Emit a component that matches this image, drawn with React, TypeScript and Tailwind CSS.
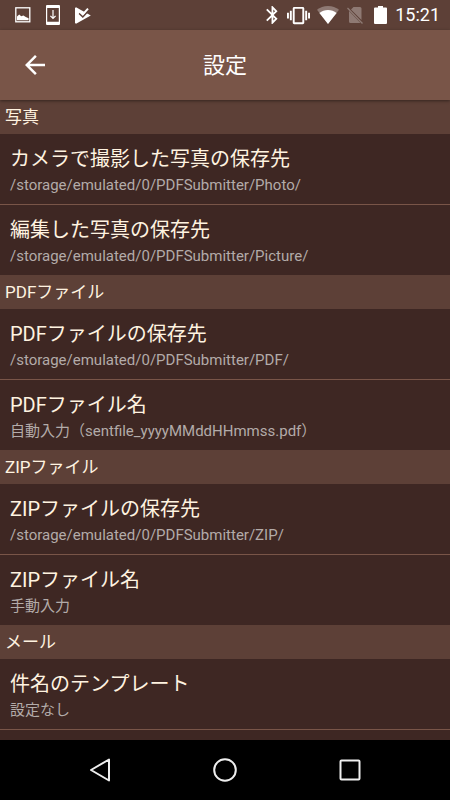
import React from 'react';

interface SettingItem {
  title: string;
  summary: string;
  divider?: boolean;
}

interface SettingSection {
  heading: string;
  items: SettingItem[];
}

const sections: SettingSection[] = [
  {
    heading: '写真',
    items: [
      { title: 'カメラで撮影した写真の保存先', summary: '/storage/emulated/0/PDFSubmitter/Photo/', divider: true },
      { title: '編集した写真の保存先', summary: '/storage/emulated/0/PDFSubmitter/Picture/' },
    ],
  },
  {
    heading: 'PDFファイル',
    items: [
      { title: 'PDFファイルの保存先', summary: '/storage/emulated/0/PDFSubmitter/PDF/', divider: true },
      { title: 'PDFファイル名', summary: '自動入力（sentfile_yyyyMMddHHmmss.pdf）' },
    ],
  },
  {
    heading: 'ZIPファイル',
    items: [
      { title: 'ZIPファイルの保存先', summary: '/storage/emulated/0/PDFSubmitter/ZIP/', divider: true },
      { title: 'ZIPファイル名', summary: '手動入力' },
    ],
  },
  {
    heading: 'メール',
    items: [{ title: '件名のテンプレート', summary: '設定なし', divider: true }],
  },
];

const StatusBar: React.FC = () => (
  <div className="flex h-[30px] shrink-0 items-center justify-between bg-[#5d4037] pr-[10px] pl-[15px] text-white">
    <div className="flex items-center">
      {/* Screenshot saved */}
      <svg className="h-4 w-4" viewBox="0 0 16 16" fill="none">
        <rect x="0.8" y="0.8" width="14" height="14" stroke="currentColor" strokeWidth="1.3" />
        <path d="M2 13.2V9.4l2.2-1.8 2 1.6L8.4 8.4l2.4 1.6 2.8 1.2v2z" fill="currentColor" />
      </svg>
      {/* Download to device */}
      <svg className="ml-[15px] h-5 w-[14px]" viewBox="0 0 14 20" fill="none">
        <path fillRule="evenodd" d="M1 0h12a1 1 0 0 1 1 1v18a1 1 0 0 1-1 1H1a1 1 0 0 1-1-1V1a1 1 0 0 1 1-1zM1.2 3v13.8h11.6V3z" fill="currentColor" />
        <path d="M7 5v8.4M4.4 10.8L7 13.4l2.6-2.6" stroke="currentColor" strokeWidth="1.2" />
      </svg>
      {/* Store update finished */}
      <svg className="ml-[15px] h-[17px] w-4" viewBox="0 0 16 17" fill="none">
        <path d="M1 0.2L15.8 8.5 1 16.8 0 16V1z" fill="currentColor" />
        <path d="M4.2 6.4l3.6 3.4L14 3.2" stroke="#5d4037" strokeWidth="1.6" />
        <path d="M5 4.8l2.8 2.6L13 1.6" stroke="currentColor" strokeWidth="2" />
      </svg>
    </div>

    <div className="flex items-center">
      <svg className="h-[18px] w-3" viewBox="5 2 13 20" fill="currentColor">
        <path d="M17.71 7.71L12 2h-1v7.59L6.41 5 5 6.41 10.59 12 5 17.59 6.41 19 11 14.41V22h1l5.71-5.71-4.3-4.29 4.3-4.29zM13 5.83l1.88 1.88L13 9.59V5.83zm1.88 10.46L13 18.17v-3.76l1.88 1.88z" />
      </svg>
      <svg className="ml-[9px] h-[23px] w-[23px]" viewBox="0 0 24 24" fill="currentColor">
        <path d="M0 15h2V9H0v6zm3 2h2V7H3v10zm19-8v6h2V9h-2zm-3 8h2V7h-2v10zM16.5 3h-9C6.67 3 6 3.67 6 4.5v15c0 .83.67 1.5 1.5 1.5h9c.83 0 1.5-.67 1.5-1.5v-15c0-.83-.67-1.5-1.5-1.5zM16 19H8V5h8v14z" />
      </svg>
      <svg className="ml-[7px] h-[18px] w-[22px]" viewBox="0 0 22 18" fill="currentColor">
        <path d="M11 0C6.7 0 2.9 1.5 0 3.8L11 18 22 3.8C19.100 1.5 15.3 0 11 0z" opacity="0.3" />
        <path d="M11 4c-3.300 0-6.200 1.100-8.600 3L11 18l8.600-11C17.200 5.100 14.300 4 11 4z" />
      </svg>
      {/* No SIM card */}
      <svg className="ml-2 h-[18px] w-4" viewBox="0 0 16 18" fill="none">
        <path d="M6.5 1H13a1.500 1.500 0 0 1 1.500 1.500V14L4 3.500zM2 5l11.500 12H3.500A1.500 1.500 0 0 1 2 15.500z" fill="currentColor" opacity="0.3" />
        <path d="M0.5 2L15.500 17.500" stroke="currentColor" strokeWidth="1.3" opacity="0.3" />
      </svg>
      <svg className="ml-[11px] h-[18px] w-[13px]" viewBox="0 0 13 18" fill="currentColor">
        <path d="M4 0h5v1.500h3a1 1 0 0 1 1 1V17a1 1 0 0 1-1 1H1a1 1 0 0 1-1-1V2.500a1 1 0 0 1 1-1h3z" />
      </svg>
      <span className="ml-2 text-lg leading-[30px]">15:21</span>
    </div>
  </div>
);

const AppBar: React.FC = () => (
  <header className="z-10 grid h-[70px] shrink-0 grid-cols-[70px_1fr_70px] items-center bg-[#795548] text-white shadow-[0_1px_3px_rgba(0,0,0,0.45)]">
    <button type="button" aria-label="戻る" className="flex h-full items-center justify-center">
      <svg className="h-[30px] w-[30px]" viewBox="0 0 24 24" fill="currentColor">
        <path d="M20 11H7.83l5.59-5.59L12 4l-8 8 8 8 1.41-1.41L7.83 13H20v-2z" />
      </svg>
    </button>
    <h1 className="pt-[2px] text-center text-[22px] leading-[30px]">設定</h1>
  </header>
);

const SettingRow: React.FC<{ item: SettingItem }> = ({ item }) => (
  <li className={item.divider ? 'border-b border-[#795548]' : ''}>
    <button type="button" className="block w-full px-[10px] pt-[11px] pb-[7px] text-left">
      <span className="block text-xl leading-7 text-[#fff3e0]">{item.title}</span>
      <span className="block text-[15px] leading-6 text-[#b3aba9]">{item.summary}</span>
    </button>
  </li>
);

const NavigationBar: React.FC = () => (
  <nav className="flex h-[60px] shrink-0 items-center justify-center bg-black text-[#eeeeee]">
    <button type="button" aria-label="戻る" className="flex h-full w-[125px] items-center justify-center">
      <svg className="h-6 w-6" viewBox="0 0 24 24" fill="none" stroke="currentColor" strokeWidth="2">
        <path d="M21 1.5v21L3 12z" strokeLinejoin="round" />
      </svg>
    </button>
    <button type="button" aria-label="ホーム" className="flex h-full w-[125px] items-center justify-center">
      <svg className="h-6 w-6" viewBox="0 0 24 24" fill="none" stroke="currentColor" strokeWidth="2">
        <circle cx="12" cy="12" r="10.8" />
      </svg>
    </button>
    <button type="button" aria-label="アプリ履歴" className="flex h-full w-[125px] items-center justify-center">
      <svg className="h-6 w-6" viewBox="0 0 24 24" fill="none" stroke="currentColor" strokeWidth="2">
        <rect x="2.5" y="2.5" width="19" height="19" rx="1" />
      </svg>
    </button>
  </nav>
);

const App: React.FC = () => {
  return (
    <div className="flex h-screen flex-col bg-[#3e2723] font-['Roboto','Noto_Sans_CJK_JP',sans-serif]">
      <StatusBar />
      <AppBar />
      <main className="min-h-0 flex-1 overflow-hidden">
        {sections.map((section) => (
          <section key={section.heading}>
            <h2 className="bg-[#5d4037] px-[5px] py-1 text-[17px] leading-[26px] text-[#fff3e0]">{section.heading}</h2>
            <ul>
              {section.items.map((item) => (
                <SettingRow key={item.title} item={item} />
              ))}
            </ul>
          </section>
        ))}
      </main>
      <NavigationBar />
    </div>
  );
};

export default App;
